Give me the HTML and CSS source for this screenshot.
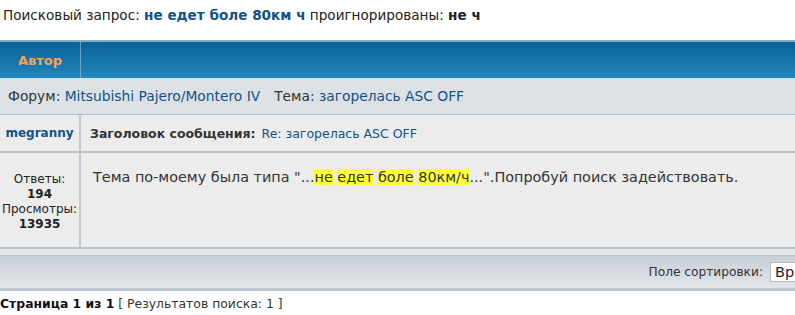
FILE: index.html
```html
<!DOCTYPE html>
<html lang="ru">
<head>
<meta charset="utf-8">
<title>Поиск</title>
<link rel="stylesheet" href="styles.css">
</head>
<body>
<div class="page">
  <p class="query">Поисковый запрос: <a class="qlink" href="#">не едет боле 80км ч</a> проигнорированы: <b>не ч</b></p>

  <div class="panel">
    <div class="head">
      <div class="head-author">Автор</div>
      <div class="head-rest"></div>
    </div>

    <div class="forum-row">
      <span>Форум: <a href="#">Mitsubishi Pajero/Montero IV</a><span class="sep"></span>Тема: <a href="#">загорелась ASC OFF</a></span>
    </div>

    <div class="row title-row">
      <div class="cell-left"><a class="author" href="#">megranny</a></div>
      <div class="cell-right"><span><b>Заголовок сообщения:</b> <a href="#">Re: загорелась ASC OFF</a></span></div>
    </div>

    <div class="row post-row">
      <div class="cell-left stats">
        <span>Ответы:</span>
        <b>194</b>
        <span>Просмотры:</span>
        <b>13935</b>
      </div>
      <div class="cell-right post">Тема по-моему была типа "...<mark>не</mark> <mark>едет</mark> <mark>боле</mark> <mark>80км/ч</mark>...".Попробуй поиск задействовать.</div>
    </div>

    <div class="foot">
      <div class="foot-bar">
        <label class="sort-label">Поле сортировки:</label>
        <span class="select">Время</span>
      </div>
    </div>
  </div>

  <p class="pages"><b>Страница 1 из 1</b> [ Результатов поиска: 1 ]</p>
</div>
</body>
</html>
```
FILE: styles.css
```css
html { overflow: hidden; }
body {
  margin: 0;
  background: #fff;
  font-family: "DejaVu Sans", Verdana, sans-serif;
  color: #333;
}
a { color: #105289; text-decoration: none; }
.page { width: 840px; }

.query {
  margin: 0;
  padding: 7px 0 0 3px;
  height: 33px;
  box-sizing: border-box;
  font-size: 13.6px;
  line-height: 16px;
  color: #222;
}
.qlink { font-weight: bold; color: #105289; }
.query b { color: #222; }

.head {
  display: grid;
  grid-template-columns: 81px 1fr;
  height: 36px;
  border-top: 2px solid #8aaec4;
  background: linear-gradient(#0a6296, #1a7bb0 70%, #2289bd);
  margin-top: 7px;
}
.head-author {
  border-right: 1px solid #6fa3c4;
  color: #f7a44e;
  font-weight: bold;
  font-size: 13px;
  display: flex;
  align-items: center;
  justify-content: center;
}

.forum-row {
  height: 37px;
  box-sizing: border-box;
  background: #dce1e5;
  border-bottom: 1px solid #b7bec5;
  display: flex;
  align-items: center;
  padding-left: 8px;
  font-size: 13.8px;
  color: #333;
  white-space: pre;
}
.sep { display: inline-block; width: 14px; }

.row {
  display: grid;
  grid-template-columns: 81px 1fr;
  background: #ececec;
  border-bottom: 2px solid #b8c0c8;
}
.cell-left { border-right: 2px solid #c3c9cf; }
.title-row { height: 38px; box-sizing: border-box; font-size: 12px; }
.title-row .cell-left, .title-row .cell-right {
  display: flex;
  align-items: center;
}
.title-row .cell-left { justify-content: center; }
.title-row .cell-right { padding-left: 9px; color: #333; font-size: 12.5px; }
.author { font-weight: bold; }
.title-row b { margin-right: 2px; }

.post-row { height: 96px; box-sizing: border-box; }
.stats {
  display: flex;
  flex-direction: column;
  align-items: center;
  padding-top: 19px;
  font-size: 12px;
  line-height: 15px;
  color: #222;
}
.post {
  padding: 15px 0 0 12px;
  font-size: 14.4px;
  line-height: 18px;
  color: #333;
}
mark { background: #ffff3a; color: #333; }

.foot {
  border-top: 6px solid #e3e6e9;
}
.foot-bar {
  height: 36px;
  box-sizing: border-box;
  border-top: 1px solid #bac3cb;
  border-bottom: 3px solid #bcc4cc;
  background: linear-gradient(#c8cfd5, #e2e6ea);
  display: flex;
  align-items: center;
  justify-content: flex-end;
  gap: 7px;
  font-size: 12.2px;
  color: #333;
}
.select {
  width: 70px;
  height: 20px;
  box-sizing: border-box;
  background: #fff;
  border: 1px solid #b4bcc4;
  font-size: 14.5px;
  line-height: 18px;
  padding-left: 4px;
  color: #222;
  overflow: hidden;
  white-space: nowrap;
}

.pages {
  margin: 0;
  padding-top: 5px;
  font-size: 12.4px;
  color: #333;
}
.pages b { color: #111; }
```
